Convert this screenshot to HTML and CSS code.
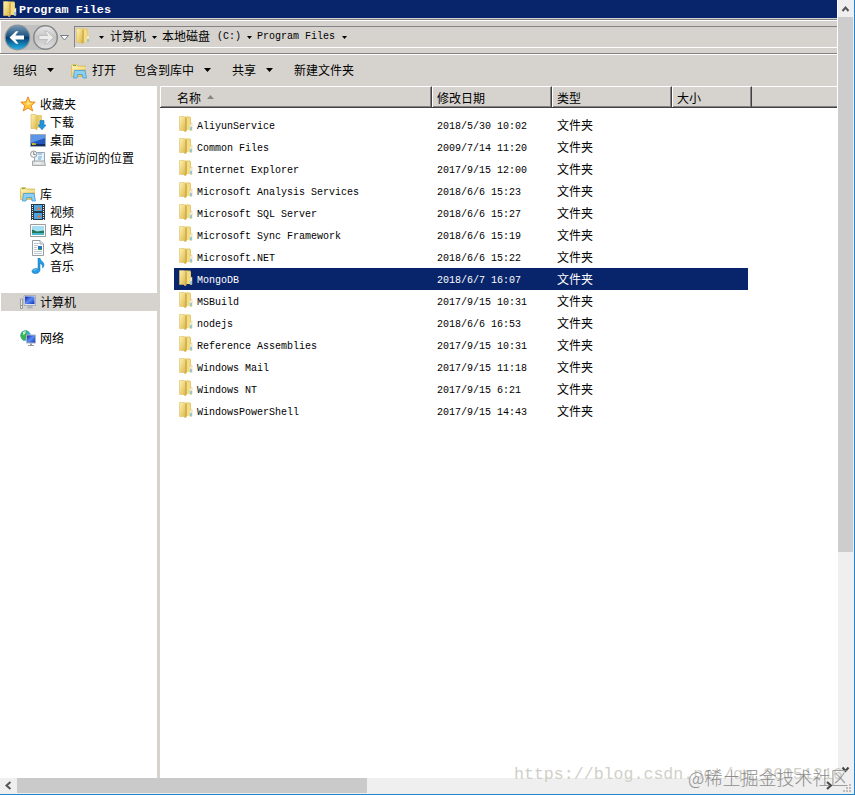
FILE: index.html
```
<!DOCTYPE html>
<html lang="zh-CN">
<head>
    <meta charset="UTF-8">
    <title>Program Files</title>
    <link rel="stylesheet" href="styles.css">
</head>
<body>
    <svg class="defs" width="0" height="0">
        <defs>
            <linearGradient id="gold" x1="0" y1="0" x2="1" y2="1">
                <stop offset="0" stop-color="#fff3b0"/>
                <stop offset="1" stop-color="#dbb445"/>
            </linearGradient>
            <linearGradient id="screen" x1="0" y1="0" x2="1" y2="1">
                <stop offset="0" stop-color="#0a1fae"/>
                <stop offset=".5" stop-color="#5b8bf0"/>
                <stop offset="1" stop-color="#0a2fc0"/>
            </linearGradient>
            <linearGradient id="backFill" x1="0" y1="0" x2="0" y2="1">
                <stop offset="0" stop-color="#7799b5"/>
                <stop offset=".45" stop-color="#1b5583"/>
                <stop offset=".5" stop-color="#063d70"/>
                <stop offset="1" stop-color="#20b6ee"/>
            </linearGradient>
            <linearGradient id="nextFill" x1="0" y1="0" x2="0" y2="1">
                <stop offset="0" stop-color="#e8e8e8"/>
                <stop offset=".5" stop-color="#c4c4c4"/>
                <stop offset="1" stop-color="#e2e2e2"/>
            </linearGradient>
        </defs>
        <symbol id="folder" viewBox="0 0 16 16">
            <path d="M7 .5h5l1 1V14H7z" fill="#e6ca6a"/>
            <path d="M12 8l2-1v7.500h-2z" fill="#f5f5e8" stroke="#d9c27a" stroke-width=".5"/>
            <path d="M12.500 11h1v3h-1z" fill="#3aa5e8"/>
            <path d="M1.500.5h4.500l2 1V15.500h-1.500l-1-1h-4z" fill="url(#gold)" stroke="#dcc068" stroke-width=".6"/>
            <path d="M8 2v13" stroke="#c5a040" stroke-width="1"/>
            <path d="M9 1.500l3 .5v12H9z" fill="#f3dc83"/>
        </symbol>
        <symbol id="library" viewBox="0 0 16 16">
            <path d="M.5 3l1-1.500h4L7 3h7.500v10.500H.5z" fill="url(#gold)" stroke="#d9b44c" stroke-width=".7"/>
            <path d="M2 2.500h3" stroke="#6fae3e"/>
            <path d="M1 5h14" stroke="#fdf2b5"/>
            <path d="M2.500 15l1-7.500h10.500l1.500 7.500H12l-.5-3.500h-5L6 15z" fill="#8ed0f5" stroke="#3f9fd8" stroke-width=".8"/>
        </symbol>
        <symbol id="star" viewBox="0 0 16 16">
            <path d="M8 .8l2 5 5.200.4-4 3.400 1.500 5.400L8 12l-4.700 3 1.500-5.400-4-3.400L6 5.800z" fill="#ffc63c" stroke="#e8811b" stroke-width=".9"/>
            <path d="M8 3l1.200 3.800 3 .5-5.700 2z" fill="#ffe58d"/>
        </symbol>
        <symbol id="download" viewBox="0 0 16 16">
            <path d="M1 1h11v13H1z" fill="#e8cf74"/>
            <path d="M1 .5h4.500L7 2v14l-2-1.500H1z" fill="url(#gold)" stroke="#d2b050" stroke-width=".6"/>
            <path d="M10 6.500h4V11h2l-4 4.800L8 11h2z" fill="#1e96e0" stroke="#1270b5" stroke-width=".6"/>
        </symbol>
        <symbol id="desktop" viewBox="0 0 16 16">
            <path d="M.5 2.500h15v12H.5z" fill="#2557bd" stroke="#9babbc"/>
            <path d="M1 3h14v3L1 11z" fill="#5b96e8"/>
            <path d="M1 12h14v2H1z" fill="#172e60"/>
            <path d="M2 11h2v2H2z" fill="#f5a623"/>
            <path d="M4 11h2v2H4z" fill="#72bf44"/>
        </symbol>
        <symbol id="recent" viewBox="0 0 16 16">
            <path d="M4.500 2.500h10v9h-10z" fill="#e7f1f8" stroke="#9aa7b2"/>
            <path d="M8 4h4M8 7h4M8 9h3" stroke="#66a5dc"/>
            <path d="M2.500 11h12l1 4.500h-13z" fill="#dadddd" stroke="#929a9d" stroke-width=".8"/>
            <path d="M5 13h6" stroke="#fff"/>
            <circle cx="3.700" cy="4.200" r="3.200" fill="#f3f4f4" stroke="#92999d"/>
            <path d="M3.700 2v2.500h2" fill="none" stroke="#606a70" stroke-width=".8"/>
        </symbol>
        <symbol id="video" viewBox="0 0 16 16">
            <path d="M1 0h14v16H1z" fill="#293945"/>
            <path d="M4 1h8v6H4zM4 9h8v6H4z" fill="#4aa6e3"/>
            <path d="M8 3l3 1-1 2H7zM7 12l3-1 1 2-3 1z" fill="#d9774d"/>
            <path d="M2.500 1v15M13.500 1v15" stroke="#eaf0f2" stroke-dasharray="1 1"/>
        </symbol>
        <symbol id="picture" viewBox="0 0 16 16">
            <path d="M.5 2.500h15v12H.5z" fill="#fff" stroke="#9c9c9c"/>
            <path d="M2 4h12v9H2z" fill="#a5def2"/>
            <path d="M2 7.500l5 2 7-1v2.500H2z" fill="#237657"/>
            <path d="M2 11h12v2H2z" fill="#4bb7cf"/>
        </symbol>
        <symbol id="document" viewBox="0 0 16 16">
            <path d="M2.500.5H10L13.500 4v11.500h-11z" fill="#fff" stroke="#8b9298" stroke-width=".9"/>
            <path d="M10 .5V4h3.500" fill="#dfe8ee" stroke="#8b9298" stroke-width=".7"/>
            <path d="M4 3.500h5M4 5.500h4M4 7.500h3M4 9.500h3M4 11.500h8M4 13.500h8" stroke="#a9bbc9" stroke-width=".8"/>
            <path d="M8 6h4v4H8z" fill="#2773c1"/>
            <path d="M8 9h4v1H8z" fill="#3d9b60"/>
        </symbol>
        <symbol id="music" viewBox="0 0 16 16">
            <path d="M8 0h2c0 3 4 3.500 4 7 0 1.500-.8 2.500-1.500 3 .5-3-1-4-2.500-4.500V12c0 4-7.500 5-8 1.500C1.800 11 5.500 10 8 11z" fill="#249be3" stroke="#1673b7" stroke-width=".5"/>
            <path d="M3.500 13c.5-1 2-1.500 3-1.200" fill="none" stroke="#8bd2fa"/>
        </symbol>
        <symbol id="computer" viewBox="0 0 16 16">
            <path d="M.5 5h2v9.500h-2z" fill="#e9eaed" stroke="#7c8389" stroke-width=".7"/>
            <path d="M1 11h1v1H1z" fill="#6db63a"/>
            <path d="M4 1.500h11.500v10H4z" fill="#e0e3ed" stroke="#9ca1ae" stroke-width=".8"/>
            <path d="M5 2.500h9.500V10H5z" fill="url(#screen)"/>
            <path d="M8 12h4l1 2.500H6.500z" fill="#adb4b9"/>
        </symbol>
        <symbol id="network" viewBox="0 0 16 16">
            <circle cx="5.500" cy="5.500" r="5.200" fill="#37a8dd"/>
            <path d="M1 4c2-4 6-4 7-3L6 4l3 2-3 2-2 3C2 9 0 7 1 4z" fill="#3cb44a"/>
            <path d="M3 2l3-1-1 3-2 1z" fill="#cdf3cf"/>
            <path d="M6.500 5h9v8h-9z" fill="url(#screen)" stroke="#aab5c2"/>
            <path d="M10 13.500h2V15h2v1H8v-1h2z" fill="#939ea7"/>
        </symbol>
        <symbol id="down" viewBox="0 0 7 4">
            <path d="M0 0h7L3.500 4z" fill="#000"/>
        </symbol>
    </svg>

    <div class="screen">
        <div class="window">
            <div class="titlebar">
                <svg class="icon"><use href="#folder"/></svg>
                <span>Program Files</span>
            </div>

            <div class="navbar">
                <svg class="nav-buttons" width="72" height="27" viewBox="0 0 72 27">
                    <path d="M17 1h28c-4 4-4 21 0 25H17z" fill="#c1c1c1"/>
                    <circle cx="16.500" cy="13.500" r="12.300" fill="url(#backFill)" stroke="#8c9299" stroke-width="1.200"/>
                    <path d="M8.500 13.500L15 7.200h2.500l-3.200 4.300H23v4h-8.700l3.200 4.300H15z" fill="#fff"/>
                    <circle cx="44.500" cy="13.500" r="11.800" fill="url(#nextFill)" stroke="#85888b" stroke-width="1.500"/>
                    <path d="M52.500 13.500L46 7.200h-2.500l3.200 4.300H38v4h8.700l-3.200 4.300H46z" fill="#ececec" stroke="#b5b5b5" stroke-width=".8"/>
                    <path d="M59.500 11.500h8l-4 4.500z" fill="#fff" stroke="#777d88"/>
                </svg>
                <div class="address">
                    <svg class="icon"><use href="#folder"/></svg>
                    <svg class="arrow first"><use href="#down"/></svg>
                    <span>计算机</span>
                    <svg class="arrow"><use href="#down"/></svg>
                    <span class="drive">本地磁盘</span>
                    <span class="latin">(C:)</span>
                    <svg class="arrow"><use href="#down"/></svg>
                    <span class="latin path">Program Files</span>
                    <svg class="arrow"><use href="#down"/></svg>
                </div>
            </div>

            <div class="toolbar">
                <div class="tool organize">组织 <svg class="arrow"><use href="#down"/></svg></div>
                <div class="tool open"><svg class="icon"><use href="#library"/></svg>打开</div>
                <div class="tool include">包含到库中 <svg class="arrow"><use href="#down"/></svg></div>
                <div class="tool share">共享 <svg class="arrow"><use href="#down"/></svg></div>
                <div class="tool">新建文件夹</div>
            </div>

            <div class="main">
                <div class="sidebar">
                    <div class="group">
                        <div class="item"><svg class="icon"><use href="#star"/></svg>收藏夹</div>
                        <div class="item sub"><svg class="icon"><use href="#download"/></svg>下载</div>
                        <div class="item sub"><svg class="icon"><use href="#desktop"/></svg>桌面</div>
                        <div class="item sub"><svg class="icon"><use href="#recent"/></svg>最近访问的位置</div>
                    </div>
                    <div class="group">
                        <div class="item"><svg class="icon"><use href="#library"/></svg>库</div>
                        <div class="item sub"><svg class="icon"><use href="#video"/></svg>视频</div>
                        <div class="item sub"><svg class="icon"><use href="#picture"/></svg>图片</div>
                        <div class="item sub"><svg class="icon"><use href="#document"/></svg>文档</div>
                        <div class="item sub"><svg class="icon"><use href="#music"/></svg>音乐</div>
                    </div>
                    <div class="group">
                        <div class="item active"><svg class="icon"><use href="#computer"/></svg>计算机</div>
                    </div>
                    <div class="group">
                        <div class="item"><svg class="icon"><use href="#network"/></svg>网络</div>
                    </div>
                </div>

                <div class="content">
                    <div class="columns">
                        <div class="col name">名称 <svg class="sort" width="7" height="4"><path d="M0 4h7L3.500 0z" fill="#868686"/></svg></div>
                        <div class="col">修改日期</div>
                        <div class="col">类型</div>
                        <div class="col size">大小</div>
                        <div class="col rest"></div>
                    </div>
                    <div class="files">
                        <div class="row"><svg class="icon"><use href="#folder"/></svg><span>AliyunService</span><span>2018/5/30 10:02</span><span class="type">文件夹</span></div>
                        <div class="row"><svg class="icon"><use href="#folder"/></svg><span>Common Files</span><span>2009/7/14 11:20</span><span class="type">文件夹</span></div>
                        <div class="row"><svg class="icon"><use href="#folder"/></svg><span>Internet Explorer</span><span>2017/9/15 12:00</span><span class="type">文件夹</span></div>
                        <div class="row"><svg class="icon"><use href="#folder"/></svg><span>Microsoft Analysis Services</span><span>2018/6/6 15:23</span><span class="type">文件夹</span></div>
                        <div class="row"><svg class="icon"><use href="#folder"/></svg><span>Microsoft SQL Server</span><span>2018/6/6 15:27</span><span class="type">文件夹</span></div>
                        <div class="row"><svg class="icon"><use href="#folder"/></svg><span>Microsoft Sync Framework</span><span>2018/6/6 15:19</span><span class="type">文件夹</span></div>
                        <div class="row"><svg class="icon"><use href="#folder"/></svg><span>Microsoft.NET</span><span>2018/6/6 15:22</span><span class="type">文件夹</span></div>
                        <div class="row selected"><svg class="icon"><use href="#folder"/></svg><span>MongoDB</span><span>2018/6/7 16:07</span><span class="type">文件夹</span></div>
                        <div class="row"><svg class="icon"><use href="#folder"/></svg><span>MSBuild</span><span>2017/9/15 10:31</span><span class="type">文件夹</span></div>
                        <div class="row"><svg class="icon"><use href="#folder"/></svg><span>nodejs</span><span>2018/6/6 16:53</span><span class="type">文件夹</span></div>
                        <div class="row"><svg class="icon"><use href="#folder"/></svg><span>Reference Assemblies</span><span>2017/9/15 10:31</span><span class="type">文件夹</span></div>
                        <div class="row"><svg class="icon"><use href="#folder"/></svg><span>Windows Mail</span><span>2017/9/15 11:18</span><span class="type">文件夹</span></div>
                        <div class="row"><svg class="icon"><use href="#folder"/></svg><span>Windows NT</span><span>2017/9/15 6:21</span><span class="type">文件夹</span></div>
                        <div class="row"><svg class="icon"><use href="#folder"/></svg><span>WindowsPowerShell</span><span>2017/9/15 14:43</span><span class="type">文件夹</span></div>
                    </div>
                </div>
            </div>
        </div>

        <div class="vscroll">
            <svg class="scroll-arrow" width="16" height="17"><path d="M4.500 11l3-3.500 3 3.500" fill="none" stroke="#555" stroke-width="2"/></svg>
            <div class="vthumb"></div>
            <svg class="scroll-arrow end" width="16" height="17"><path d="M4.500 6.500l3 3.500 3-3.500" fill="none" stroke="#444" stroke-width="2"/></svg>
        </div>
        <div class="hscroll">
            <svg class="scroll-arrow" width="17" height="15"><path d="M10.500 4l-4 3.500 4 3.500" fill="none" stroke="#555" stroke-width="2"/></svg>
            <div class="hthumb"></div>
            <svg class="scroll-arrow end" width="17" height="15"><path d="M7 4l4 3.500L7 11" fill="none" stroke="#444" stroke-width="2"/></svg>
        </div>
        <div class="corner">
            <svg width="16" height="16"><path d="M12 6h2v2h-2zM9 9h2v2H9zM12 9h2v2h-2zM6 12h2v2H6zM9 12h2v2H9zM12 12h2v2h-2z" fill="#bdbdbd"/></svg>
        </div>
        <div class="mark-url">https://blog.csdn.net/qq_36051316</div>
        <div class="mark-site">@稀土掘金技术社区</div>
    </div>
</body>
</html>
```

FILE: styles.css
```
body {
    margin: 0;
    font-family: "Noto Sans CJK SC", sans-serif;
    font-size: 12px;
    color: #000;
    overflow: hidden;
}

.defs {
    position: absolute;
}

.screen {
    position: relative;
    display: grid;
    grid-template-columns: 837px 17px;
    grid-template-rows: 778px 16px;
    width: 855px;
    height: 795px;
    box-sizing: border-box;
    border-right: 1px solid #2483c9;
    border-bottom: 1px solid #2483c9;
    background-color: #efefef;
    overflow: hidden;
}

.window {
    display: flex;
    flex-direction: column;
    background-color: #d6d3ce;
    overflow: hidden;
}

.icon {
    width: 16px;
    height: 16px;
    flex: none;
}

.arrow {
    width: 7px;
    height: 4px;
    flex: none;
}

.titlebar {
    display: flex;
    align-items: center;
    height: 18px;
    padding-left: 2px;
    background-color: #08246b;
    color: #fff;
    font: bold 11.8px "Liberation Mono", monospace;
}

.titlebar span {
    padding: 1px 0 0 1px;
}

.navbar {
    display: flex;
    height: 35px;
    box-sizing: border-box;
    margin-top: 1px;
    padding: 4px 0 0 1px;
    border-top: 1px solid #848284;
    border-bottom: 1px solid #848284;
    box-shadow: inset 1px 1px #fff;
}

.nav-buttons {
    flex: none;
}

.address {
    display: flex;
    align-items: center;
    flex: 1;
    height: 22px;
    box-sizing: border-box;
    margin: 2px 0 0 1px;
    padding-bottom: 2px;
    border-top: 1px solid #848284;
    border-left: 1px solid #848284;
    border-bottom: 1px solid #fff;
    line-height: 18px;
}

.address .arrow {
    width: 5px;
    height: 3px;
    margin: 2px 5px 0 6px;
}

.address .arrow.first {
    margin-left: 8px;
    margin-right: 6px;
}

.address .drive {
    padding-right: 7px;
}

.latin {
    font: 10px "Liberation Mono", monospace;
}

.path {
    width: 79px;
    white-space: nowrap;
}

.toolbar {
    display: flex;
    align-items: center;
    height: 32px;
    box-sizing: border-box;
    padding: 0 0 2px 13px;
    border-top: 1px solid #fff;
}

.tool {
    display: flex;
    align-items: center;
    line-height: 16px;
}

.tool .arrow {
    margin-left: 10px;
    margin-top: 1px;
}

.organize {
    width: 58px;
}

.open {
    width: 63px;
}

.open .icon {
    margin: 3px 5px 0 0;
}

.include {
    width: 98px;
}

.share {
    width: 62px;
}

.main {
    display: flex;
    height: 692px;
}

.sidebar {
    width: 157px;
    box-sizing: border-box;
    padding: 9px 0 0 1px;
    background-color: #fff;
    flex: none;
}

.group {
    margin-bottom: 18px;
}

.item {
    display: flex;
    align-items: center;
    height: 18px;
    padding-left: 19px;
    line-height: 18px;
}

.item .icon {
    margin-right: 4px;
}

.sub {
    padding-left: 29px;
}

.active {
    background-color: #d6d3ce;
}

.content {
    flex: 1;
    margin-left: 3px;
    background-color: #fff;
}

.columns {
    display: flex;
    height: 22px;
    box-sizing: border-box;
    border-bottom: 1px solid #424142;
    background-color: #d6d3ce;
}

.col {
    display: flex;
    align-items: center;
    width: 120px;
    box-sizing: border-box;
    padding-left: 4px;
    border-top: 1px solid #fff;
    border-left: 1px solid #fff;
    border-right: 1px solid #424142;
    box-shadow: inset -1px -1px #848284;
}

.col.name {
    width: 272px;
    padding-left: 16px;
}

.col.size {
    width: 80px;
}

.col.rest {
    flex: 1;
    border-left: 0;
    border-right: 0;
    box-shadow: inset 0 -1px #848284;
}

.sort {
    margin-left: 6px;
}

.files {
    margin: 6px 0 0 14px;
    width: 574px;
}

.row {
    display: grid;
    grid-template-columns: 23px 240px 120px 1fr;
    align-items: center;
    height: 22px;
    font: 10px "Liberation Mono", monospace;
}

.row span {
    padding-top: 2px;
}

.row .icon {
    margin: -2px 0 0 4px;
}

.row .type {
    padding-top: 0;
    font: 12px/20px "Noto Sans CJK SC", sans-serif;
}

.selected {
    background-color: #08246b;
    color: #fff;
}

.vscroll {
    display: flex;
    flex-direction: column;
    padding-left: 1px;
    box-shadow: inset 1px 0 #fff;
    background-color: #efefef;
}

.vthumb {
    width: 15px;
    height: 535px;
    background-color: #cdcdcd;
}

.hscroll {
    display: flex;
    height: 15px;
    background-color: #efefef;
}

.hthumb {
    width: 350px;
    background-color: #cacaca;
}

.scroll-arrow {
    flex: none;
}

.end {
    margin-top: auto;
}

.hscroll .end {
    margin-top: 0;
    margin-left: auto;
}

/* watermarks over the window */
.mark-url {
    position: absolute;
    left: 514px;
    top: 763px;
    font: 16.6px/24px "Liberation Mono", monospace;
    color: #d0d0c8;
    white-space: nowrap;
}

.mark-site {
    position: absolute;
    left: 688px;
    top: 765px;
    font-size: 18px;
    line-height: 25px;
    font-weight: 300;
    color: #8d8d8d;
    white-space: nowrap;
}
```
